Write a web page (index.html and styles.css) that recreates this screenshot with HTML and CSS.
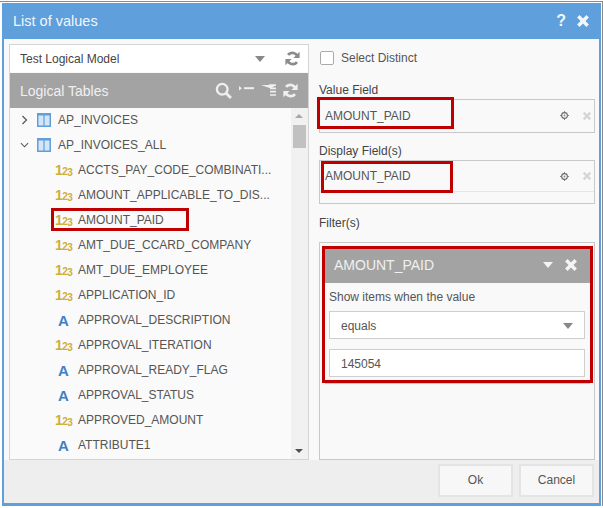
FILE: index.html
```html
<!DOCTYPE html>
<html lang="en">
<head>
    <meta charset="UTF-8">
    <title>List of values</title>
    <link rel="stylesheet" href="styles.css">
</head>
<body>
    <svg class="sprites" width="0" height="0">
        <symbol id="refresh" viewBox="0 0 16 16">
            <path d="M13.4 6.6A5.8 5.8 0 0 0 3.2 4.2" fill="none" stroke="currentColor" stroke-width="2.9"/>
            <path d="M15.6 .8v6.6H9z" fill="currentColor"/>
            <path d="M2.6 9.4a5.8 5.8 0 0 0 10.2 2.4" fill="none" stroke="currentColor" stroke-width="2.9"/>
            <path d="M.4 15.2V8.6H7z" fill="currentColor"/>
        </symbol>
        <symbol id="table" viewBox="0 0 14 14">
            <rect x="0.75" y="0.75" width="12.5" height="12.5" fill="#d5e5f6" stroke="#5e9fdc" stroke-width="1.5"/>
            <path d="M7 1v12" stroke="#5e9fdc" stroke-width="1.2"/>
            <path d="M1 1.5h12" stroke="#5e9fdc" stroke-width="2"/>
        </symbol>
        <symbol id="gear" viewBox="0 0 10 10">
            <circle cx="5" cy="5" r="3.2" fill="none" stroke="#666" stroke-width="1.2"/>
            <circle cx="5" cy="5" r="1" fill="#888"/>
            <path d="M5 0v1.5M5 8.5V10M0 5h1.5M8.5 5H10" stroke="#777" stroke-width="1"/>
        </symbol>
        <symbol id="cross" viewBox="0 0 12 12">
            <path d="M2 2l8 8M10 2l-8 8" stroke="currentColor" stroke-width="3"/>
        </symbol>
    </svg>

    <div class="dialog">
        <div class="title-bar">
            <span class="title">List of values</span>
            <span class="help">?</span>
            <svg class="close"><use href="#cross"/></svg>
        </div>

        <div class="content">
            <div class="left-panel">
                <div class="model-select">
                    <span class="model-name">Test Logical Model</span>
                    <span class="caret"></span>
                    <svg class="refresh"><use href="#refresh"/></svg>
                </div>
                <div class="tables-header">
                    <span class="tables-title">Logical Tables</span>
                    <svg class="tool-icon" viewBox="0 0 16 16" width="17" height="17">
                        <circle cx="6.8" cy="6.8" r="5" fill="none" stroke="currentColor" stroke-width="2.2"/>
                        <path d="M10.5 10.5l4.5 4.5" stroke="currentColor" stroke-width="2.6"/>
                    </svg>
                    <svg class="tool-icon" viewBox="0 0 15 10" width="15" height="10">
                        <path d="M0 0l3 2.2L0 4.4z" fill="currentColor"/>
                        <path d="M5 2.2h10" stroke="currentColor" stroke-width="2"/>
                    </svg>
                    <svg class="tool-icon" viewBox="0 0 15 13" width="15" height="13">
                        <path d="M0 1h15L10 4.4z" fill="currentColor"/>
                        <path d="M8 1h7M9 4.4h6M9 7.6h6M9 11h6" stroke="currentColor" stroke-width="1.6"/>
                    </svg>
                    <svg class="tool-icon last"><use href="#refresh"/></svg>
                </div>
                <div class="tree-wrap">
                    <ul class="tree">
                        <li class="table-row">
                            <svg class="chevron" viewBox="0 0 8 10"><path d="M2 1l4 4-4 4" fill="none" stroke="#555" stroke-width="1.2"/></svg>
                            <svg class="table-icon"><use href="#table"/></svg>
                            AP_INVOICES
                        </li>
                        <li class="table-row">
                            <svg class="chevron" viewBox="0 0 10 8"><path d="M1 2l4 4 4-4" fill="none" stroke="#555" stroke-width="1.2"/></svg>
                            <svg class="table-icon"><use href="#table"/></svg>
                            AP_INVOICES_ALL
                        </li>
                        <li class="column-row"><span class="num-icon">1<small>2</small><small class="low">3</small></span>ACCTS_PAY_CODE_COMBINATI...</li>
                        <li class="column-row"><span class="num-icon">1<small>2</small><small class="low">3</small></span>AMOUNT_APPLICABLE_TO_DIS...</li>
                        <li class="column-row"><span class="num-icon">1<small>2</small><small class="low">3</small></span>AMOUNT_PAID<span class="mark mark-tree"></span></li>
                        <li class="column-row"><span class="num-icon">1<small>2</small><small class="low">3</small></span>AMT_DUE_CCARD_COMPANY</li>
                        <li class="column-row"><span class="num-icon">1<small>2</small><small class="low">3</small></span>AMT_DUE_EMPLOYEE</li>
                        <li class="column-row"><span class="num-icon">1<small>2</small><small class="low">3</small></span>APPLICATION_ID</li>
                        <li class="column-row"><span class="text-icon">A</span>APPROVAL_DESCRIPTION</li>
                        <li class="column-row"><span class="num-icon">1<small>2</small><small class="low">3</small></span>APPROVAL_ITERATION</li>
                        <li class="column-row"><span class="text-icon">A</span>APPROVAL_READY_FLAG</li>
                        <li class="column-row"><span class="text-icon">A</span>APPROVAL_STATUS</li>
                        <li class="column-row"><span class="num-icon">1<small>2</small><small class="low">3</small></span>APPROVED_AMOUNT</li>
                        <li class="column-row"><span class="text-icon">A</span>ATTRIBUTE1</li>
                    </ul>
                    <div class="scrollbar">
                        <span class="arrow-up"></span>
                        <span class="thumb"></span>
                        <span class="arrow-down"></span>
                    </div>
                </div>
            </div>

            <div class="right-panel">
                <label class="distinct"><span class="checkbox"></span>Select Distinct</label>

                <div class="field-label first">Value Field</div>
                <div class="field-box">
                    <div class="field-row">
                        <span class="field-name">AMOUNT_PAID</span>
                        <svg class="gear"><use href="#gear"/></svg>
                        <svg class="remove"><use href="#cross"/></svg>
                    </div>
                    <span class="mark mark-value"></span>
                </div>

                <div class="field-label second">Display Field(s)</div>
                <div class="field-box display">
                    <div class="field-row">
                        <span class="field-name">AMOUNT_PAID</span>
                        <svg class="gear"><use href="#gear"/></svg>
                        <svg class="remove"><use href="#cross"/></svg>
                    </div>
                    <span class="mark mark-display"></span>
                </div>

                <div class="field-label third">Filter(s)</div>
                <div class="filter-box">
                    <div class="filter-card">
                        <div class="filter-head">
                            <span class="filter-title">AMOUNT_PAID</span>
                            <span class="caret white"></span>
                            <svg class="filter-close"><use href="#cross"/></svg>
                        </div>
                        <div class="filter-body">
                            <div class="filter-hint">Show items when the value</div>
                            <div class="filter-input">equals<span class="caret"></span></div>
                            <div class="filter-input">145054</div>
                        </div>
                    </div>
                </div>
            </div>
        </div>

        <div class="footer">
            <button class="btn">Ok</button>
            <button class="btn">Cancel</button>
        </div>
    </div>
</body>
</html>
```

FILE: styles.css
```css
* {
    box-sizing: border-box;
}
html, body {
    margin: 0;
    padding: 0;
    height: 100%;
    background-color: #fff;
}
body {
    padding: 1px 0 1px 0;
    font-family: "Liberation Sans", Arial, sans-serif;
    font-size: 12px;
    color: #555;
}
.sprites {
    display: block;
    height: 0;
}
.dialog {
    display: flex;
    flex-direction: column;
    height: 505px;
    padding-right: 1px;
    border-top: 1px solid #8a8a8a;
    border-right: 1px solid #8a8a8a;
}
.title-bar {
    display: flex;
    align-items: center;
    height: 36px;
    flex: none;
    margin-top: 1px;
    padding: 0 11px 0 11px;
    margin-left: 2px;
    background-color: #5e9fdc;
    color: #f2f6fb;
}
.title {
    flex: 1;
    font-size: 14.5px;
}
.help {
    font-size: 16px;
    font-weight: bold;
    margin-right: 10px;
}
.close {
    width: 14px;
    height: 14px;
    color: #f2f6fb;
}
.content {
    flex: 1;
    display: flex;
    min-height: 0;
    margin-left: 2px;
    padding: 5px 4px 0 5px;
    background-color: #f9f9f9;
    border-left: 2px solid #5e9fdc;
    border-right: 2px solid #5e9fdc;
}
.left-panel {
    display: flex;
    flex-direction: column;
    flex: none;
    width: 300px;
    border: 1px solid #d4d4d4;
    border-top: none;
}
.model-select {
    display: flex;
    align-items: center;
    height: 28px;
    padding: 0 8px 0 10px;
    background-color: #fff;
    border-top: 1px solid #d4d4d4;
    margin-bottom: 1px;
    color: #444;
}
.model-name {
    flex: 1;
}
.caret {
    display: inline-block;
    width: 0;
    height: 0;
    border-left: 5px solid transparent;
    border-right: 5px solid transparent;
    border-top: 6px solid #888;
}
.caret.white {
    border-top-color: #f4f4f4;
    margin-right: 11px;
}
.refresh {
    width: 15px;
    height: 15px;
    margin-left: 20px;
    color: #8c8c8c;
}
.tables-header {
    display: flex;
    align-items: center;
    height: 35px;
    padding: 0 10px;
    background-color: #a3a3a3;
    color: #f0f0f0;
}
.tables-title {
    flex: 1;
    font-size: 14px;
}
.tool-icon {
    margin-left: 7px;
    color: #efefef;
}
.tool-icon.last {
    width: 15px;
    height: 15px;
}
.tree-wrap {
    flex: 1;
    display: flex;
    min-height: 0;
    overflow: hidden;
    background-color: #fafafa;
}
.tree {
    flex: 1;
    list-style: none;
    margin: 0;
    padding: 0;
}
.table-row, .column-row {
    display: flex;
    align-items: center;
    height: 25px;
    padding-bottom: 1px;
    white-space: nowrap;
}
.table-row {
    padding-left: 10px;
}
.column-row {
    padding-left: 45px;
    position: relative;
}
.chevron {
    width: 9px;
    height: 10px;
    margin-right: 8px;
}
.table-icon {
    width: 14px;
    height: 14px;
    margin-right: 7px;
}
.num-icon {
    width: 23px;
    font-size: 14px;
    color: #cfae3a;
    font-weight: 700;
    letter-spacing: -0.5px;
}
.num-icon small {
    font-size: 10px;
    font-weight: 700;
}
.num-icon .low {
    position: relative;
    top: 1px;
}
.text-icon {
    width: 23px;
    padding-left: 3px;
    font-size: 15px;
    font-weight: 700;
    color: #3f80c5;
}
.scrollbar {
    position: relative;
    flex: none;
    width: 17px;
    background-color: #f1f1f1;
}
.thumb {
    position: absolute;
    top: 17px;
    left: 2px;
    width: 13px;
    height: 23px;
    background-color: #c1c1c1;
}
.arrow-up, .arrow-down {
    position: absolute;
    left: 4px;
    width: 0;
    height: 0;
    border-left: 4px solid transparent;
    border-right: 4px solid transparent;
}
.arrow-up {
    top: 6px;
    border-bottom: 4px solid #a8a8a8;
}
.arrow-down {
    bottom: 6px;
    border-top: 4px solid #505050;
}
.right-panel {
    display: flex;
    flex-direction: column;
    flex: 1;
    min-width: 0;
    margin-left: 10px;
}
.distinct {
    display: flex;
    align-items: center;
    height: 16px;
    margin-top: 6px;
    padding-left: 1px;
    color: #555;
}
.checkbox {
    width: 14px;
    height: 14px;
    margin-right: 7px;
    background-color: #fff;
    border: 1px solid #aaa;
    border-radius: 2px;
}
.field-label {
    height: 15px;
    line-height: 17px;
    color: #444;
}
.field-label.first {
    margin-top: 16px;
}
.field-label.second {
    margin-top: 10px;
}
.field-label.third {
    margin-top: 11px;
    margin-bottom: 12px;
}
.field-box {
    position: relative;
    height: 34px;
    margin-top: 2px;
    border: 1px solid #c9c9c9;
}
.field-box.display {
    height: 44px;
}
.field-row {
    display: flex;
    align-items: center;
    height: 31px;
    padding-left: 5px;
}
.display .field-row {
    border-bottom: 1px solid #e6e6e6;
}
.field-name {
    flex: 1;
}
.gear {
    width: 9px;
    height: 9px;
    margin-right: 13px;
}
.remove {
    width: 10px;
    height: 10px;
    margin-right: 2px;
    color: #d6d6d6;
}
.mark {
    position: absolute;
    border: 3px solid #c00000;
    pointer-events: none;
}
.mark-value {
    left: -3px;
    top: -3px;
    width: 137px;
    height: 32px;
}
.mark-display {
    left: 1px;
    top: 0;
    width: 132px;
    height: 32px;
}
.mark-tree {
    left: 41px;
    top: 0;
    width: 138px;
    height: 23px;
}
.filter-box {
    flex: 1;
    padding: 3px 0 0 2px;
    border: 1px solid #c9c9c9;
}
.filter-card {
    border: 3px solid #c00000;
    width: 271px;
    box-shadow: 0 4px 0 -3px #c9c9c9;
}
.filter-head {
    display: flex;
    align-items: center;
    height: 34px;
    padding: 0 12px 2px 9px;
    background-color: #a3a3a3;
    color: #f0f0f0;
}
.filter-title {
    flex: 1;
    font-size: 14px;
}
.filter-close {
    width: 14px;
    height: 14px;
    color: #f4f4f4;
}
.filter-body {
    padding: 7px 5px 3px 4px;
}
.filter-hint {
    height: 15px;
    line-height: 15px;
    margin-bottom: 6px;
}
.filter-input {
    display: flex;
    align-items: center;
    justify-content: space-between;
    height: 28px;
    padding: 1px 11px 0 11px;
    margin-bottom: 10px;
    background-color: #fff;
    border: 1px solid #cfcfcf;
}
.filter-input:last-child {
    margin-bottom: 0;
}
.footer {
    display: flex;
    justify-content: flex-end;
    align-items: center;
    flex: none;
    gap: 6px;
    height: 46px;
    margin-left: 2px;
    padding: 0 5px 3px 0;
    background-color: #eeeeee;
    border-left: 2px solid #5e9fdc;
    border-right: 2px solid #5e9fdc;
    border-bottom: 3px solid #5e9fdc;
}
.btn {
    width: 75px;
    height: 33px;
    font-family: inherit;
    font-size: 12px;
    color: #555;
    background-color: #f7f7f7;
    border: 2px solid #e4e4e4;
    cursor: pointer;
}
```
